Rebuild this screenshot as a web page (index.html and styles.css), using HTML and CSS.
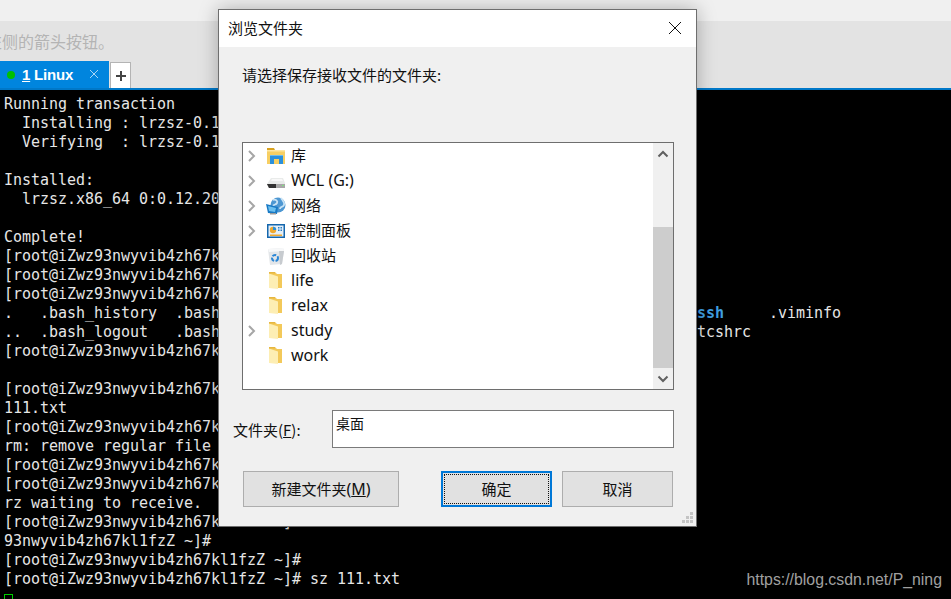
FILE: index.html
```html
<!DOCTYPE html>
<html lang="zh-CN">
<head>
<meta charset="utf-8">
<title>浏览文件夹</title>
<link rel="stylesheet" href="styles.css">
</head>
<body>
<div class="app">
  <div class="topbar"></div>
  <div class="band">
    <div class="hint">左侧的箭头按钮。</div>
    <div class="tabs">
      <div class="tab">
        <span class="dot"></span>
        <span class="tab-name"><u>1</u> Linux</span>
        <svg class="tab-x" width="10" height="10" viewBox="0 0 10 10"><path d="M1 1l8 8M9 1l-8 8" stroke="#a9d6f5" stroke-width="1" fill="none"/></svg>
      </div>
      <div class="tab-add"><svg width="12" height="12" viewBox="0 0 12 12"><path d="M6 1v10M1 6h10" stroke="#444" stroke-width="2" fill="none"/></svg></div>
    </div>
  </div>
  <div class="rule"></div>
  <pre class="term">Running transaction
  Installing : lrzsz-0.1
  Verifying  : lrzsz-0.1

Installed:
  lrzsz.x86_64 0:0.12.20

Complete!
[root@iZwz93nwyvib4zh67k
[root@iZwz93nwyvib4zh67k
[root@iZwz93nwyvib4zh67k
.   .bash_history  .bash                                                     <b>ssh</b>     .viminfo
..  .bash_logout   .bash                                                     tcshrc
[root@iZwz93nwyvib4zh67k

[root@iZwz93nwyvib4zh67k
111.txt
[root@iZwz93nwyvib4zh67k
rm: remove regular file
[root@iZwz93nwyvib4zh67k
[root@iZwz93nwyvib4zh67k
rz waiting to receive.
[root@iZwz93nwyvib4zh67kl1fzZ ~]#
93nwyvib4zh67kl1fzZ ~]#
[root@iZwz93nwyvib4zh67kl1fzZ ~]#
[root@iZwz93nwyvib4zh67kl1fzZ ~]# sz 111.txt
<span class="cursor"></span></pre>
</div>

<div class="watermark">https://blog.csdn.net/P_ning</div>

<section class="dialog">
  <header class="titlebar">
    <span>浏览文件夹</span>
    <svg width="14" height="14" viewBox="0 0 14 14"><path d="M1 1l12 12M13 1L1 13" stroke="#111" stroke-width="1" fill="none"/></svg>
  </header>
  <div class="body">
    <p class="prompt">请选择保存接收文件的文件夹:</p>
    <div class="tree">
      <ul class="items">
        <li class="item"><svg class="chev" width="10" height="14" viewBox="0 0 10 14"><path d="M2 2l5 5-5 5" stroke="#a6a6a6" stroke-width="2" fill="none"/></svg>
          <svg class="ico" width="20" height="18" viewBox="0 0 20 18"><path d="M1 1h7l1 2H1z" fill="#d9a21f"/><path d="M1 3h18v14H1z" fill="#f7cf63"/><path d="M1 3h18v1.500H1z" fill="#fde6a3"/><path d="M4 8h13v9h-4v-5H8v5H4z" fill="#2b90dc"/><path d="M4 8h13v1H4z" fill="#6cbcf0"/></svg>
          <span>库</span></li>
        <li class="item"><svg class="chev" width="10" height="14" viewBox="0 0 10 14"><path d="M2 2l5 5-5 5" stroke="#a6a6a6" stroke-width="2" fill="none"/></svg>
          <svg class="ico" width="20" height="18" viewBox="0 0 20 18"><path d="M5 6h12l2 5v1H1z" fill="#e9ebea"/><path d="M6 7h10l1 2H5z" fill="#f8f8f8"/><path d="M1 12h18v4H3z" fill="#a8a8a8"/><path d="M1 12h9v4H3z" fill="#333"/><path d="M16 13h2v1h-2z" fill="#7fe07f"/></svg>
          <span class="latin">WCL (G:)</span></li>
        <li class="item"><svg class="chev" width="10" height="14" viewBox="0 0 10 14"><path d="M2 2l5 5-5 5" stroke="#a6a6a6" stroke-width="2" fill="none"/></svg>
          <svg class="ico" width="20" height="18" viewBox="0 0 20 18"><circle cx="12" cy="8" r="7.500" fill="#4d97d2"/><path d="M7 3c3-1 5 1 4 3s-3 1-4 3M15 1c1 2 4 4 3 7s-4 1-4 4" stroke="#c9e3f5" stroke-width="1.800" fill="none"/><path d="M0 7l12 3-1 7-9-1z" fill="#1879c4"/><path d="M2 9l8 2-1 4-6-1z" fill="#6cc0f0"/><path d="M4 16h6v1.500H4z" fill="#9a9a9a"/></svg>
          <span>网络</span></li>
        <li class="item"><svg class="chev" width="10" height="14" viewBox="0 0 10 14"><path d="M2 2l5 5-5 5" stroke="#a6a6a6" stroke-width="2" fill="none"/></svg>
          <svg class="ico" width="20" height="18" viewBox="0 0 20 18"><path d="M1 2h18v14H1z" fill="#1567ad"/><path d="M2.500 3.500h15v11h-15z" fill="#e4eff8"/><circle cx="7" cy="8" r="3.200" fill="#f0a92e"/><path d="M7 8V4.800A3.200 3.200 0 0 1 10.200 8z" fill="#2a8fd8"/><path d="M12 5h1.500v1.500H12zM14.500 5H16v1.500h-1.500zM12 7.500h1.500V9H12zM14.500 7.500H16V9h-1.500z" fill="#2a7fc4"/><path d="M4 12.500h12V14H4z" fill="#f0a92e"/></svg>
          <span>控制面板</span></li>
        <li class="item"><span class="chev-gap"></span>
          <svg class="ico" width="20" height="18" viewBox="0 0 20 18"><path d="M2 2l15-1 1 3-2 13-12 1z" fill="#e3e6e9"/><path d="M2 2l15-1 1 3-15 1z" fill="#f7f8f9"/><path d="M13 4l1 14 2-1 2-13z" fill="#c7cbcf"/><circle cx="9" cy="11" r="3" fill="none" stroke="#2a86d6" stroke-width="2" stroke-dasharray="4 1.500"/></svg>
          <span>回收站</span></li>
        <li class="item"><span class="chev-gap"></span>
          <svg class="ico" width="20" height="18" viewBox="0 0 20 18"><path class="fback" d="M3 0h6l2 2h5v14H3z"/><path class="ffront" d="M3 1.500l9 3V17l-9-1z"/><path class="fedge" d="M3 0h6v1.500H3z"/></svg>
          <span class="latin">life</span></li>
        <li class="item"><span class="chev-gap"></span>
          <svg class="ico" width="20" height="18" viewBox="0 0 20 18"><path class="fback" d="M3 0h6l2 2h5v14H3z"/><path class="ffront" d="M3 1.500l9 3V17l-9-1z"/><path class="fedge" d="M3 0h6v1.500H3z"/></svg>
          <span class="latin">relax</span></li>
        <li class="item"><svg class="chev" width="10" height="14" viewBox="0 0 10 14"><path d="M2 2l5 5-5 5" stroke="#a6a6a6" stroke-width="2" fill="none"/></svg>
          <svg class="ico" width="20" height="18" viewBox="0 0 20 18"><path class="fback" d="M3 0h6l2 2h5v14H3z"/><path class="ffront" d="M3 1.500l9 3V17l-9-1z"/><path class="fedge" d="M3 0h6v1.500H3z"/></svg>
          <span class="latin">study</span></li>
        <li class="item"><span class="chev-gap"></span>
          <svg class="ico" width="20" height="18" viewBox="0 0 20 18"><path class="fback" d="M3 0h6l2 2h5v14H3z"/><path class="ffront" d="M3 1.500l9 3V17l-9-1z"/><path class="fedge" d="M3 0h6v1.500H3z"/></svg>
          <span class="latin">work</span></li>
      </ul>
      <div class="scrollbar">
        <div class="sb-btn"><svg width="12" height="8" viewBox="0 0 12 8"><path d="M1.500 6.500L6 2l4.500 4.500" stroke="#606060" stroke-width="2" fill="none"/></svg></div>
        <div class="sb-track"><div class="sb-thumb"></div></div>
        <div class="sb-btn"><svg width="12" height="8" viewBox="0 0 12 8"><path d="M1.500 1.500L6 6l4.500-4.500" stroke="#606060" stroke-width="2" fill="none"/></svg></div>
      </div>
    </div>
    <div class="field">
      <label class="field-label">文件夹(<u>F</u>):</label>
      <div class="input">桌面</div>
    </div>
    <div class="actions">
      <button class="btn btn-new">新建文件夹<span class="latin">(<u>M</u>)</span></button>
      <button class="btn btn-ok"><span class="focus">确定</span></button>
      <button class="btn btn-cancel">取消</button>
    </div>
  </div>
  <svg class="grip" width="12" height="12" viewBox="0 0 12 12"><path d="M8 0h3v3H8zM4 4h3v3H4zM8 4h3v3H8zM0 8h3v3H0zM4 8h3v3H4zM8 8h3v3H8z" fill="#c4c4c4"/></svg>
</section>
</body>
</html>
```

FILE: styles.css
```css
* { box-sizing: border-box; }
html, body { margin: 0; padding: 0; width: 951px; height: 599px; overflow: hidden; background: #000; }

.app { display: flex; flex-direction: column; height: 599px; overflow: hidden; }
.topbar { height: 21px; background: #f0f0f0; flex: none; }
.band { height: 67px; background: #e3e3e3; flex: none; display: flex; flex-direction: column; justify-content: space-between; }
.hint { margin: 9px 0 0 -14px; font: 16px/22px "Noto Sans CJK SC", sans-serif; color: #b4b4b4; white-space: nowrap; }
.tabs { display: flex; align-items: flex-end; height: 27px; }
.tab { width: 109px; height: 27px; background: #0085de; display: flex; align-items: center; padding-left: 7px; color: #fff; }
.dot { width: 8px; height: 8px; border-radius: 50%; background: #00c000; flex: none; }
.tab-name { margin-left: 7px; font: bold 15px/27px "Liberation Sans", sans-serif; letter-spacing: -0.2px; white-space: nowrap; }
.tab-x { margin-left: 16px; margin-top: -2px; flex: none; }
.tab-add { width: 21px; height: 26px; margin-left: 1px; background: #fff; border: 1px solid #b4b4b4; border-bottom: 0; display: flex; align-items: center; justify-content: center; }
.rule { height: 2px; background: #0078c8; flex: none; }

.term { margin: 0; padding: 5px 0 0 4px; flex: 1; background: #000; color: #e6e6e6; font: 15px/19px "DejaVu Sans Mono", monospace; letter-spacing: -0.03px; white-space: pre; overflow: hidden; }
.term b { color: #3f9fe0; font-weight: bold; }
.cursor { display: inline-block; width: 9px; height: 11px; border: 1px solid #00d000; vertical-align: top; margin-top: 5px; }

.watermark { position: absolute; right: 9px; top: 570px; font: 15.85px/20px "Liberation Sans", sans-serif; color: #a0a0a0; }

.dialog { position: absolute; left: 218px; top: 9px; width: 479px; height: 518px; background: #f0f0f0; border: 1px solid #6e6e6e; box-shadow: 0 0 18px rgba(0,0,0,.28); font-family: "Noto Sans CJK SC", sans-serif; color: #111; display: flex; flex-direction: column; }
.titlebar { height: 37px; background: #fff; display: flex; align-items: center; justify-content: space-between; padding: 0 14px 2px 9px; font-size: 15px; flex: none; }
.body { display: flex; flex-direction: column; padding: 0 22px 0 23px; flex: 1; }
.prompt { margin: 17px 0 0; font-size: 15px; line-height: 22px; height: 22px; }
.tree { margin-top: 56px; width: 432px; height: 248px; background: #fff; border: 1px solid #6e6e6e; display: flex; flex: none; }
.items { list-style: none; margin: 0; padding: 0; flex: 1; }
.item { height: 25px; display: flex; align-items: center; font: 15px/25px "Noto Sans CJK SC", sans-serif; }
.chev { margin-left: 4px; flex: none; }
.chev-gap { width: 14px; flex: none; }
.ico { margin-left: 9px; flex: none; }
.item span:last-child { margin-left: 5px; margin-bottom: 2px; }
.latin { font: 16px/20px "Noto Sans", sans-serif; }
.fback { fill: #f3c95a; }
.ffront { fill: #fdeeb4; }
.fedge { fill: #e6b640; }
.scrollbar { width: 20px; background: #f0f0f0; display: flex; flex-direction: column; flex: none; }
.sb-btn { height: 22px; display: flex; align-items: center; justify-content: center; flex: none; }
.sb-track { flex: 1; padding-top: 62px; }
.sb-thumb { height: 141px; background: #cdcdcd; }
.field { display: flex; margin-top: 20px; margin-left: -9px; align-items: flex-start; }
.field-label { width: 99px; margin-top: 9px; font-size: 15px; line-height: 22px; }
.input { width: 342px; height: 38px; background: #fff; border: 1px solid #7a7a7a; padding: 2px 3px; font-size: 14px; line-height: 20px; }
.actions { display: flex; margin-top: 23px; margin-left: 1px; }
.btn { height: 36px; background: #e1e1e1; border: 1px solid #adadad; font: 15px/20px "Noto Sans CJK SC", sans-serif; color: #111; padding: 0; flex: none; }
.btn-new { width: 156px; }
.btn-ok { width: 111px; margin-left: 42px; border: 2px solid #0078d7; padding: 1px; display: flex; }
.focus { flex: 1; border: 1px dotted #111; display: flex; align-items: center; justify-content: center; }
.btn-cancel { width: 111px; margin-left: 10px; }
.grip { position: absolute; right: 2px; bottom: 2px; }
```
